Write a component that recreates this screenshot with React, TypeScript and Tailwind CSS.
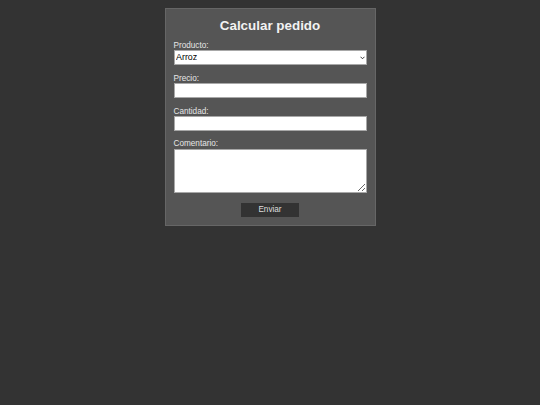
import React from 'react';

const labelCls = 'block text-[8.2px] leading-[9.4px] text-[#e6e6e6]';
const fieldCls = 'block h-[15px] w-full border border-[#a8a8a8] bg-white text-[8.9px] text-black';

export default function App() {
  return (
    <div className="min-h-screen bg-[#333333] pt-[8px] font-['Liberation_Sans',Arial,sans-serif]">
      <form
        className="mx-auto w-[211px] border border-[#666666] bg-[#555555] px-[8px] pt-[8.5px] pb-[8px]"
        onSubmit={(e) => e.preventDefault()}
      >
        <h2 className="mb-[8px] text-center text-[13.4px] leading-[15.4px] font-bold text-[#f2f2f2]">
          Calcular pedido
        </h2>

        {/* Producto */}
        <div className="mb-[8.5px]">
          <label className={labelCls}>Producto:</label>
          <div className="relative">
            <select className={`${fieldCls} appearance-none pl-[1.5px] leading-[13px]`}>
              <option>Arroz</option>
              <option>Frijol</option>
              <option>Maíz</option>
            </select>
            <svg
              className="pointer-events-none absolute top-[6px] right-[2px] h-[4px] w-[5px]"
              viewBox="0 0 10 8"
              fill="none"
              stroke="#222"
              strokeWidth={1.8}
            >
              <path d="M1 1.5l4 4 4-4" />
            </svg>
          </div>
        </div>

        {/* Precio */}
        <div className="mb-[8.5px]">
          <label className={labelCls}>Precio:</label>
          <input type="text" className={fieldCls} />
        </div>

        {/* Cantidad */}
        <div className="mb-[8px]">
          <label className={labelCls}>Cantidad:</label>
          <input type="text" className={fieldCls} />
        </div>

        {/* Comentario */}
        <div className="mb-[10px]">
          <label className={labelCls}>Comentario:</label>
          <textarea className="block h-[44px] w-full border border-[#a8a8a8] bg-white text-[8.9px]" />
        </div>

        <div className="flex justify-center">
          <button
            type="submit"
            className="h-[14px] w-[58px] bg-[#333333] text-[8.2px] leading-[14px] text-[#dddddd]"
          >
            Enviar
          </button>
        </div>
      </form>
    </div>
  );
}
